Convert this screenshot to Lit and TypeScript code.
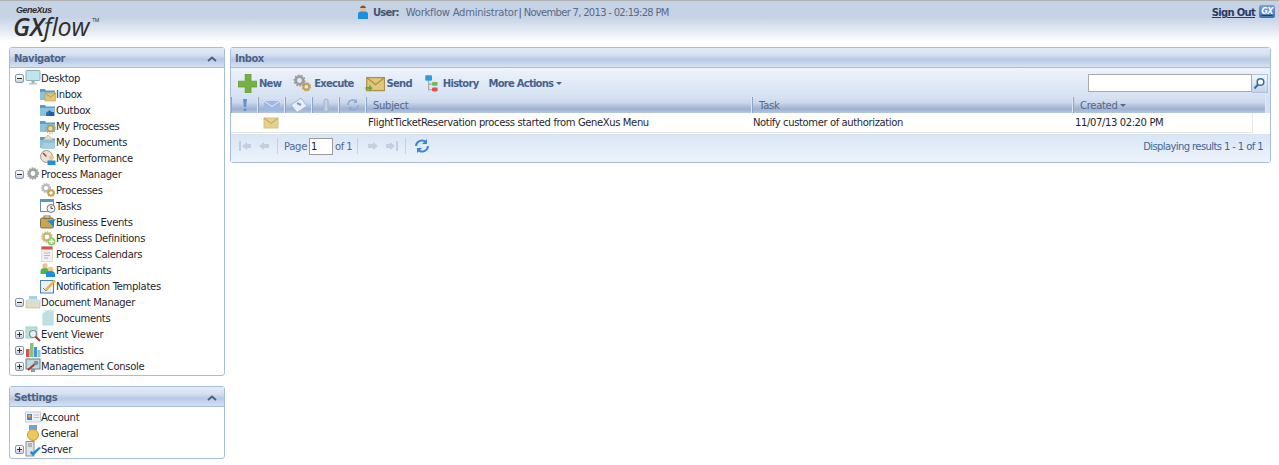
import { LitElement, css, html, svg } from "lit";
import { customElement } from "lit/decorators.js";

const icon = (body: unknown, w = 16, h = 16) => html`<svg class="ico" width=${w} height=${h} viewBox="0 0 16 16">${body}</svg>`;

const gear = (x: number, y: number, r: number, c = "#a8a8a8") => svg`
  <circle cx=${x} cy=${y} r=${r} fill="none" stroke=${c} stroke-width=${r * 0.7} />
  <circle cx=${x} cy=${y} r=${r + r * 0.42} fill="none" stroke=${c} stroke-width=${r * 0.4} stroke-dasharray="1.4 1.2" />`;

const folder = svg`
  <path d="M0 3h5l1 1.5h9V14H0z" fill="#5a9dc4" />
  <path d="M0 6h15v8H0z" fill="#8cc2dc" />`;

const ICONS: Record<string, unknown> = {
  desktop: icon(svg`<rect x="1" y="0.500" width="14" height="10" rx="1" fill="#bfe6ea" stroke="#8fb3bc" /><rect x="6.500" y="11" width="3" height="2" fill="#9ab3b8" /><rect x="4" y="13" width="8" height="1.500" fill="#b5c6ca" />`),
  inbox: icon(svg`${folder}<rect x="5" y="7" width="11" height="8" fill="#e2c676" stroke="#b79a4e" stroke-width=".6" /><path d="M5 7l5.500 4L16 7" fill="none" stroke="#b79a4e" />`),
  outbox: icon(svg`${folder}<path d="M6 14v-3l3.500-3 3.500 3v3z" fill="#2a6fb5" /><path d="M9 10h5v4H9z" fill="#1d5fa5" />`),
  myproc: icon(svg`${folder}<circle cx="10.500" cy="10.500" r="3" fill="#e8d9a8" stroke="#b09750" stroke-width="1.600" /><circle cx="10.500" cy="10.500" r="5" fill="none" stroke="#b09750" stroke-dasharray="1.200 1.400" />`),
  mydocs: icon(svg`${folder}<path d="M3 6l5-5 5 5z" fill="#e6dcc0" stroke="#b5a77f" stroke-width=".6" /><path d="M3 9h12l-1 6H2z" fill="#a7cfe0" />`),
  myperf: icon(svg`<circle cx="6.500" cy="6.500" r="6" fill="#e9e2d6" stroke="#a89a88" /><path d="M6.500 6.500L3 3" stroke="#c0392b" stroke-width="1.400" /><circle cx="11.500" cy="7.500" r="2.500" fill="#f1c48f" /><path d="M7.500 15v-4.500h8V15z" fill="#1c8ee0" />`),
  pm: icon(svg`${gear(8, 7.5, 3.8, "#a2a2a2")}`),
  processes: icon(svg`${gear(6, 6, 3.2, "#bcbcbc")}${gear(11, 11, 2.6, "#c2a356")}`),
  tasks: icon(svg`<rect x="0.500" y="1.500" width="13" height="12" fill="#fff" stroke="#6f8fb5" /><rect x="0.500" y="1.500" width="13" height="2.500" fill="#5b96cf" /><circle cx="11" cy="10.500" r="4" fill="#f1f1f1" stroke="#777" /><path d="M11 8v2.500h2" fill="none" stroke="#555" />`),
  bizev: icon(svg`<rect x="0.500" y="4" width="13" height="10" rx="1.500" fill="#c8a458" stroke="#8b6f36" /><rect x="4" y="2" width="6" height="2.500" fill="none" stroke="#8b6f36" /><path d="M7 7l9-2-3 4 0 4-2-3z" fill="#1d8fd8" />`),
  procdef: icon(svg`${gear(7, 7, 3.6, "#c9b67a")}<circle cx="11.500" cy="11.500" r="4" fill="#8fcf6a" /><path d="M11.500 9v5M9 11.500h5" stroke="#fff" stroke-width="1.500" />`),
  cal: icon(svg`<rect x="1.500" y="0.500" width="11" height="15" fill="#f1f1f1" stroke="#dedede" /><rect x="1.500" y="0.500" width="11" height="3" fill="#d8504a" /><path d="M4 7h6M4 9.500h6M4 12h4" stroke="#b5b5b5" />`),
  part: icon(svg`<circle cx="5" cy="4" r="2.700" fill="#f0c38d" /><path d="M0.500 12V9a4.500 3 0 0 1 9 0v3z" fill="#4fb548" /><circle cx="10.500" cy="7.500" r="2.700" fill="#f0c38d" /><path d="M6 15v-3a4.500 3 0 0 1 9 0v3z" fill="#1c8ee0" />`),
  notif: icon(svg`<rect x="0.500" y="2.500" width="13" height="12.500" fill="#e9f1fa" stroke="#4d7fb5" /><path d="M3 10l3 3 3-4" fill="none" stroke="#4d7fb5" /><path d="M5 11L14 1.500l2 1.500-9 10z" fill="#e8b54b" />`),
  dm: icon(svg`<path d="M1 7h14v7H1z" fill="#e2dcc4" stroke="#bcb594" stroke-width=".6" /><path d="M4 2h8v6H4z" fill="#a8d2e2" /><path d="M0 6l5-1h6l5 1-1 2H1z" fill="#cbe2ec" />`),
  doc: icon(svg`<path d="M2.500 0.500h11v15h-11z" fill="#bfe0e2" stroke="#d4ecee" /><path d="M2.500 0.500L6 0.500 2.500 4z" fill="#fff" />`),
  ev: icon(svg`<rect x="1" y="1" width="11" height="11" fill="#b8e0dc" stroke="#a5cfca" /><circle cx="8" cy="8" r="3.500" fill="#e8f3f3" stroke="#7e8f92" stroke-width="1.200" /><path d="M10.500 10.500L15 15" stroke="#a23a34" stroke-width="2" />`),
  stat: icon(svg`<rect x="1" y="7" width="3.500" height="8" fill="#d8504a" /><rect x="5" y="1" width="3.500" height="14" fill="#8cbf7a" /><rect x="9" y="5" width="3" height="10" fill="#4a92d0" /><rect x="12.500" y="8" width="3" height="7" fill="#8cc2e4" />`),
  mc: icon(svg`<rect x="1" y="1" width="14" height="10" fill="#bcd9de" stroke="#687f88" /><rect x="6" y="11" width="4" height="3" fill="#8a9aa0" /><path d="M3 12l8-7" stroke="#b3332d" stroke-width="2" /><circle cx="11" cy="5" r="2.300" fill="#7e8f92" />`),
  acct: icon(svg`<rect x="0.500" y="3" width="15" height="10" fill="#eef0f6" stroke="#c5cbdc" /><rect x="2" y="5" width="5" height="6" fill="#3f86d0" /><circle cx="4.500" cy="7" r="1.600" fill="#e8a050" /><path d="M9 6h5M9 8.500h5" stroke="#b9c0d2" />`),
  general: icon(svg`<path d="M4 0h8v5H4z" fill="#7f9fcb" /><circle cx="8" cy="10" r="5.500" fill="#edc760" stroke="#c99b37" />`),
  server: icon(svg`<rect x="1" y="0.500" width="8" height="14.500" fill="#e1e3e6" stroke="#8a8e95" /><path d="M3 3h4M3 5h4" stroke="#888" /><path d="M5 12l3 3 8-8-2-1-6 5-2-1z" fill="#1c8ee0" />`),
};

type Node = { label: string; icon: string; level: 0 | 1; exp?: "minus" | "plus" };

const NAV: Node[] = [
  { label: "Desktop", icon: "desktop", level: 0, exp: "minus" },
  { label: "Inbox", icon: "inbox", level: 1 },
  { label: "Outbox", icon: "outbox", level: 1 },
  { label: "My Processes", icon: "myproc", level: 1 },
  { label: "My Documents", icon: "mydocs", level: 1 },
  { label: "My Performance", icon: "myperf", level: 1 },
  { label: "Process Manager", icon: "pm", level: 0, exp: "minus" },
  { label: "Processes", icon: "processes", level: 1 },
  { label: "Tasks", icon: "tasks", level: 1 },
  { label: "Business Events", icon: "bizev", level: 1 },
  { label: "Process Definitions", icon: "procdef", level: 1 },
  { label: "Process Calendars", icon: "cal", level: 1 },
  { label: "Participants", icon: "part", level: 1 },
  { label: "Notification Templates", icon: "notif", level: 1 },
  { label: "Document Manager", icon: "dm", level: 0, exp: "minus" },
  { label: "Documents", icon: "doc", level: 1 },
  { label: "Event Viewer", icon: "ev", level: 0, exp: "plus" },
  { label: "Statistics", icon: "stat", level: 0, exp: "plus" },
  { label: "Management Console", icon: "mc", level: 0, exp: "plus" },
];

const SETTINGS: Node[] = [
  { label: "Account", icon: "acct", level: 0 },
  { label: "General", icon: "general", level: 0 },
  { label: "Server", icon: "server", level: 0, exp: "plus" },
];

const chevron = html`<svg class="chev" width="10" height="6" viewBox="0 0 10 6"><path d="M1 5l4-3.500L9 5" fill="none" stroke="#4a5f80" stroke-width="1.800" /></svg>`;

const hdrIcons = [
  svg`<path d="M6 2h4l-.8 8H6.800zM6.600 11.500h2.800V14H6.600z" fill="#6f8fcb" />`,
  svg`<rect x="0" y="4" width="16" height="10" fill="#9db8e2" /><path d="M0 4l8 5.500L16 4" fill="none" stroke="#e4ecf8" />`,
  svg`<path d="M0 8l10-7 6 8-10 6.500z" fill="#e6edf8" stroke="#9fb5d8" /><path d="M6 6l4 2" stroke="#7f9bcb" stroke-width="2" />`,
  svg`<path d="M6 4a2 2 0 0 1 4 0v9a2 2 0 0 1-4 0z" fill="#c6d2e4" stroke="#a9b7cc" stroke-width="1.200" />`,
  svg`<path d="M3 8a5 5 0 0 1 9-3M13 8a5 5 0 0 1-9 3" fill="none" stroke="#8fa9d4" stroke-width="1.500" /><path d="M12 2v4H8zM4 14v-4h4z" fill="#8fa9d4" />`,
];

@customElement("app-root")
export class AppRoot extends LitElement {
  static styles = css`
    :host {
      display: block;
      height: 465px;
      overflow: hidden;
      background: #fff;
      font-family: "DejaVu Sans", Verdana, sans-serif;
      font-size: 10px;
      letter-spacing: -0.3px;
      color: #1f1f2e;
    }
    .ico { display: block; flex: none; }
    .top {
      height: 42px;
      box-sizing: border-box;
      border-top: 1px solid #b0b0b0;
      background: linear-gradient(#c4d2e4 0, #c6d3e5 40%, #e6ecf5 75%, #fff 100%);
      display: flex;
      align-items: flex-start;
    }
    .logo { width: 355px; padding: 5px 0 0 13px; box-sizing: border-box; color: #2e2e2e; }
    .logo .gx {
      font-family: "Liberation Sans", sans-serif;
      font-size: 9px;
      font-style: italic;
      font-weight: bold;
      letter-spacing: -0.5px;
      margin-left: 3px;
      line-height: 8px;
    }
    .logo .flow {
      font-family: "Open Sans", sans-serif;
      font-size: 25px;
      font-style: italic;
      line-height: 25px;
      letter-spacing: -0.2px;
    }
    .logo .flow b { font-weight: 600; }
    .logo sup { font-size: 5px; font-style: normal; vertical-align: 14px; line-height: 0; margin-left: 3px; }
    .user { display: flex; align-items: center; margin-top: 3px; color: #5a6a86; height: 16px; }
    .user b { color: #44546f; margin: 0 7px 0 2px; letter-spacing: -0.8px; }
    .user .name { letter-spacing: -0.25px; }
    .user .date { letter-spacing: -0.7px; }
    .user .sep { color: #44546f; margin: 0 2px 0 1px; }
    .signout {
      margin-left: auto;
      margin-top: 6px;
      margin-right: 4px;
      display: flex;
      align-items: flex-start;
      gap: 4px;
      font-weight: bold;
      color: #2a3a66;
      text-decoration: underline;
      letter-spacing: -0.7px;
    }
    .gxbtn {
      width: 16px;
      height: 13px;
      margin-top: -2px;
      border-radius: 2px;
      background: linear-gradient(#7aa2d8, #3f6fb0);
      color: #fff;
      font-size: 8px;
      font-style: italic;
      font-weight: bold;
      line-height: 13px;
      text-align: center;
    }
    .body {
      display: grid;
      grid-template-columns: 216px minmax(0, 1fr);
      gap: 5px;
      padding: 5px 8px 0 9px;
      align-items: start;
    }
    .side { display: flex; flex-direction: column; gap: 10px; }
    .panel {
      border: 1px solid #a8bcdc;
      border-radius: 3px;
      background: #fff;
      min-width: 0;
    }
    .ph {
      height: 20px;
      box-sizing: border-box;
      display: flex;
      align-items: center;
      justify-content: space-between;
      padding: 2px 7px 0 4px;
      background: linear-gradient(#e3eaf6 0, #d6e0f0 35%, #b7c9e5 60%, #d6e1f2 100%);
      border-bottom: 1px solid #a8bcdc;
      font-weight: bold;
      color: #4f6384;
      letter-spacing: -0.5px;
    }
    .tree { padding: 2px 0 1px; }
    .node { height: 16px; display: flex; align-items: center; }
    .exp {
      width: 7px;
      height: 7px;
      margin: 0 1px 0 5px;
      border: 1px solid #8d97a8;
      border-radius: 2px;
      background: linear-gradient(#fff, #c8d0de);
      position: relative;
      flex: none;
    }
    .exp::before { content: ""; position: absolute; left: 1px; right: 1px; top: 3px; height: 1px; background: #333; }
    .exp.plus::after { content: ""; position: absolute; top: 1px; bottom: 1px; left: 3px; width: 1px; background: #333; }
    .noexp { width: 15px; flex: none; }
    .lvl1 { padding-left: 30px; }
    .node span { white-space: nowrap; }
    .tb {
      height: 29px;
      box-sizing: border-box;
      display: flex;
      align-items: center;
      padding: 1px 2px 0 7px;
      background: linear-gradient(#eef3fb, #d5e1f2);
      font-weight: bold;
      color: #47628f;
      letter-spacing: -0.75px;
    }
    .tbtn { display: flex; align-items: center; gap: 2px; margin-right: 11px; }
    .more { display: flex; align-items: center; gap: 3px; }
    .more i { width: 0; height: 0; border: 3px solid transparent; border-top-color: #47628f; border-bottom: 0; }
    .search { margin-left: auto; display: flex; }
    .search .inp { width: 162px; height: 16px; border: 1px solid #a9a9a9; background: #fff; }
    .search .go {
      width: 15px;
      height: 17px;
      border: 1px solid #b3c2da;
      border-left: 0;
      background: linear-gradient(#f4f7fb, #c3d3ea);
      display: flex;
      align-items: center;
      justify-content: center;
    }
    .grid { display: grid; grid-template-columns: 27px 27px 27px 27px 27px 386px 321px 193px minmax(0, 1fr); }
    .hc {
      height: 16px;
      box-sizing: border-box;
      border-right: 1px solid #dfe7f3;
      border-left: 1px solid #8ea4c6;
      background: linear-gradient(#d8e2f1, #cbd8eb 35%, #9db1d1 75%, #b5c6e0);
      display: flex;
      align-items: center;
      padding-left: 6px;
      color: #52688c;
    }
    .hc.i { justify-content: center; padding: 0; }
    .hc.last { background: #d5e1f2; border: 0; padding: 0; }
    .hc em { font-style: normal; margin-left: 3px; width: 0; height: 0; border: 3px solid transparent; border-top-color: #52688c; border-bottom: 0; }
    .row { display: grid; grid-template-columns: 137px 385px 322px 177px; height: 19px; align-items: center; border-bottom: 1px solid #e5e5e0; width: 1021px; border-right: 1px solid #e9e9e4; letter-spacing: -0.38px; }
    .row .mail { padding-left: 32px; }
    .pager {
      height: 29px;
      box-sizing: border-box;
      display: flex;
      align-items: center;
      padding: 0 7px 4px 7px;
      background: linear-gradient(#d9e5f5, #edf3fb);
      border-top: 1px solid #fff;
      color: #52688c;
    }
    .pager .a { margin-right: 5px; }
    .pager .s { width: 1px; height: 16px; background: #c5d2e6; margin: 0 6px 0 1px; }
    .pager .s.r { margin-left: 5px; margin-right: 8px; }
    .pager .s.e { margin-left: 1px; margin-right: 8px; }
    .pager .pg { width: 21px; height: 15px; border: 1px solid #9a9a9a; background: #fff; color: #222; margin: 0 2px; line-height: 15px; padding-left: 1px; }
    .pager .of { letter-spacing: -0.5px; }
    .pager .res { margin-left: auto; color: #3f6797; letter-spacing: -0.6px; }
    .hist { margin-right: 10px; }
  `;

  private renderNode(n: Node) {
    return html`<div class="node ${n.level ? "lvl1" : ""}">
      ${n.level
        ? ""
        : n.exp
          ? html`<div class="exp ${n.exp}"></div>`
          : html`<div class="noexp"></div>`}
      ${ICONS[n.icon]}
      <span>${n.label}</span>
    </div>`;
  }

  private arrow(d: string) {
    return html`<svg class="ico a" width="14" height="12" viewBox="0 0 14 12"><path d=${d} fill="#c3cfe0" /></svg>`;
  }

  render() {
    return html`
      <div class="top">
        <div class="logo">
          <div class="gx">GeneXus</div>
          <div class="flow"><b>GX</b>flow<sup>TM</sup></div>
        </div>
        <div class="user">
          ${icon(svg`<circle cx="8" cy="4.500" r="3" fill="#e9bd8a" /><path d="M8 1.500a3 3 0 0 1 3 2.500H5a3 3 0 0 1 3-2.500z" fill="#6e5a3e" /><path d="M3 15V10a3 2.500 0 0 1 3-2.500h4a3 2.500 0 0 1 3 2.500v5z" fill="#1c8ee0" />`)}
          <b>User:</b>
          <span class="name">Workflow Administrator</span><span class="sep">|</span><span class="date">November 7, 2013 - 02:19:28 PM</span>
        </div>
        <div class="signout">
          <span>Sign Out</span>
          <div class="gxbtn">GX</div>
        </div>
      </div>
      <div class="body">
        <div class="side">
          <div class="panel">
            <div class="ph"><span>Navigator</span>${chevron}</div>
            <div class="tree">${NAV.map((n) => this.renderNode(n))}</div>
          </div>
          <div class="panel">
            <div class="ph"><span>Settings</span>${chevron}</div>
            <div class="tree">${SETTINGS.map((n) => this.renderNode(n))}</div>
          </div>
        </div>
        <div class="panel main">
          <div class="ph"><span>Inbox</span></div>
          <div class="tb">
            <div class="tbtn">${icon(svg`<path d="M6 0h5v6h5v5h-5v5H6v-5H0V6h6z" fill="#74b043" stroke="#5a9430" stroke-width=".5" />`, 19, 19)}<span>New</span></div>
            <div class="tbtn">${icon(svg`${gear(6, 6, 3, "#9d9d9d")}${gear(11.5, 11, 2.3, "#c2a356")}`, 20, 20)}<span>Execute</span></div>
            <div class="tbtn">${icon(svg`<rect x="1" y="3" width="15" height="11" fill="#e0c678" stroke="#a88f4b" /><path d="M1 3l7.500 6L16 3" fill="none" stroke="#a88f4b" /><path d="M0 11h3V9l3 3-3 3v-2H0z" fill="#5fae3b" />`, 20, 19)}<span>Send</span></div>
            <div class="tbtn hist">${icon(svg`<rect x="2" y="1" width="6" height="5" rx="1" fill="#2d9be4" /><rect x="8" y="7" width="5" height="3.500" rx="1" fill="#6dbb5a" /><rect x="8" y="12" width="5" height="3.500" rx="1" fill="#e0534a" /><path d="M5 6v8h3M5 9h3" fill="none" stroke="#9aa" />`, 18, 18)}<span>History</span></div>
            <div class="more"><span>More Actions</span><i></i></div>
            <div class="search">
              <div class="inp"></div>
              <div class="go"><svg width="13" height="13" viewBox="0 0 13 13"><circle cx="7.500" cy="5" r="3.300" fill="#fff" stroke="#2d6fa8" stroke-width="1.500" /><path d="M5 7.500L1.500 11.500" stroke="#2d6fa8" stroke-width="2" /></svg></div>
            </div>
          </div>
          <div class="grid">
            ${hdrIcons.map((b) => html`<div class="hc i">${icon(b)}</div>`)}
            <div class="hc">Subject</div>
            <div class="hc">Task</div>
            <div class="hc">Created<em></em></div>
            <div class="hc last"></div>
          </div>
          <div class="row">
            <div class="mail">${icon(svg`<rect x="1" y="3" width="14" height="10" fill="#e5d08d" stroke="#d9c27d" /><path d="M1 3l7 5.500L15 3" fill="none" stroke="#b9a25e" />`)}</div>
            <div>FlightTicketReservation process started from GeneXus Menu</div>
            <div>Notify customer of authorization</div>
            <div>11/07/13 02:20 PM</div>
          </div>
          <div class="pager">
            ${this.arrow("M1 1h2v10H1zM4 6l5-4v2h4v4H9v2z")}
            ${this.arrow("M2 6l5-4v2h5v4H7v2z")}
            <div class="s"></div>
            <span>Page</span>
            <div class="pg">1</div>
            <span class="of">of 1</span>
            <div class="s r"></div>
            ${this.arrow("M12 6L7 2v2H2v4h5v2z")}
            ${this.arrow("M13 1h-2v10h2zM10 6L5 2v2H1v4h4v2z")}
            <div class="s e"></div>
            <svg class="ico" width="16" height="16" viewBox="0 0 16 16"><path d="M2 8a6 6 0 0 1 10-4M14 8a6 6 0 0 1-10 4" fill="none" stroke="#3a86d6" stroke-width="2" /><path d="M13 1v5H8zM3 15v-5h5z" fill="#3a86d6" /></svg>
            <span class="res">Displaying results 1 - 1 of 1</span>
          </div>
        </div>
      </div>
    `;
  }
}
